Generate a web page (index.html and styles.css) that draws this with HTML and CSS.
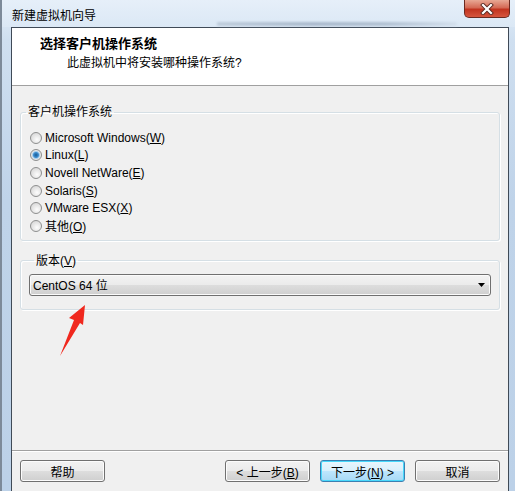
FILE: index.html
```html
<!DOCTYPE html>
<html>
<head>
    <meta charset="utf-8">
    <title>新建虚拟机向导</title>
    <link rel="stylesheet" href="styles.css">
</head>
<body>
    <div class="window">
        <div class="titlebar">
            <span class="title">新建虚拟机向导</span>
            <button class="close-btn" type="button">
                <svg width="16" height="12" viewBox="0 0 16 12">
                    <path d="M4 2 L12 10 M12 2 L4 10" stroke="#5a2a22" stroke-width="4" stroke-linecap="square"/>
                    <path d="M4 2 L12 10 M12 2 L4 10" stroke="#fff" stroke-width="2.2" stroke-linecap="square"/>
                </svg>
            </button>
        </div>

        <div class="client">
            <div class="header">
                <h1>选择客户机操作系统</h1>
                <p>此虚拟机中将安装哪种操作系统?</p>
            </div>

            <div class="content">
                <fieldset class="group">
                    <legend>客户机操作系统</legend>
                    <label class="radio"><input type="radio" name="os"><span>Microsoft Windows(<u>W</u>)</span></label>
                    <label class="radio"><input type="radio" name="os" checked><span>Linux(<u>L</u>)</span></label>
                    <label class="radio"><input type="radio" name="os"><span>Novell NetWare(<u>E</u>)</span></label>
                    <label class="radio"><input type="radio" name="os"><span>Solaris(<u>S</u>)</span></label>
                    <label class="radio"><input type="radio" name="os"><span>VMware ESX(<u>X</u>)</span></label>
                    <label class="radio"><input type="radio" name="os"><span>其他(<u>O</u>)</span></label>
                </fieldset>

                <fieldset class="group version">
                    <legend>版本(<u>V</u>)</legend>
                    <div class="select">
                        <span>CentOS 64 位</span>
                        <svg width="7" height="4" viewBox="0 0 7 4"><path d="M0 0 H7 L3.5 4 Z" fill="#000"/></svg>
                    </div>
                </fieldset>
            </div>

            <div class="footer">
                <button class="btn" type="button">帮助</button>
                <div class="nav">
                    <button class="btn" type="button">&lt; 上一步(<u>B</u>)</button>
                    <button class="btn default" type="button">下一步(<u>N</u>) &gt;</button>
                    <button class="btn" type="button">取消</button>
                </div>
            </div>
        </div>

        <!-- red pointer drawn over the dialog -->
        <svg class="pointer" width="60" height="80" viewBox="0 0 60 80">
            <path d="M43 15 L27 28 L32 30 L18 66 L38 33 L41 35 Z" fill="#f0281e"/>
        </svg>
    </div>
</body>
</html>
```

FILE: styles.css
```css
* {
    box-sizing: border-box;
}
body {
    margin: 0;
    font-family: "Liberation Sans", "Noto Sans CJK SC", sans-serif;
    font-size: 12px;
    color: #000;
    background: #fff;
}
.window {
    position: relative;
    width: 515px;
    height: 491px;
    overflow: hidden;
    background: linear-gradient(180deg, #e3edf8 0px, #cfdff0 40px, #bfd3e9 200px, #bcd1e8 491px);
    border-left: 2px solid #7d8a99;
}
.titlebar {
    position: relative;
    height: 27px;
    display: flex;
    align-items: flex-start;
    justify-content: space-between;
    background: linear-gradient(180deg, #e6eff9 0%, #dbe8f5 100%);
}
.titlebar::after {
    content: "";
    position: absolute;
    left: 215px;
    top: 22px;
    width: 240px;
    height: 4px;
    background: linear-gradient(90deg, #b8c6d6, #9fb0c4 40%, #a8b8cb 70%, #d2deeb);
    filter: blur(1.2px);
    opacity: 0.8;
}
.title {
    margin: 6px 0 0 10px;
    font-size: 12px;
    color: #000;
}
.close-btn {
    width: 46px;
    height: 18px;
    margin-right: 5px;
    padding: 0;
    border: 1px solid #6b2a20;
    border-top: none;
    border-radius: 0 0 5px 5px;
    background: linear-gradient(180deg, #e8a894 0%, #d46a55 45%, #c1341f 55%, #d6563e 100%);
    display: flex;
    align-items: center;
    justify-content: center;
}
.client {
    width: 498px;
    height: 464px;
    margin-left: 9px;
    background: #f0f0f0;
    border: 1px solid #3f4a57;
    border-bottom: none;
    display: flex;
    flex-direction: column;
}
.header {
    height: 58px;
    background: #fff;
    border-bottom: 1px solid #a0a0a0;
    padding: 8px 0 0 28px;
}
.header h1 {
    margin: 0;
    font-size: 13px;
    font-weight: bold;
    line-height: 16px;
}
.header p {
    margin: 3px 0 0 27px;
    font-size: 12px;
    line-height: 16px;
}
.content {
    flex: 1;
    padding: 18px 8px 0 8px;
}
.group {
    margin: 0;
    padding: 9px 0 5px 0;
    border: 1px solid #d5dfe5;
    border-radius: 3px;
    box-shadow: inset 1px 1px 0 #fff, 1px 1px 0 #fff;
}
.group legend {
    padding: 0 2px;
    margin-left: 5px;
    line-height: 16px;
}
.radio {
    display: flex;
    align-items: center;
    height: 17.6px;
    margin-left: 9px;
}
.radio input {
    appearance: none;
    -webkit-appearance: none;
    width: 12px;
    height: 12px;
    margin: 0 3px 0 0;
    border: 1px solid #8e8f8f;
    border-radius: 50%;
    background: radial-gradient(circle at 60% 65%, #fdfdfd 0%, #e3e3e3 55%, #d0d0d0 100%);
}
.radio input:checked {
    background: radial-gradient(circle, #1b5a92 0, #3d8ed0 2.5px, #a7cdec 3.5px, #e8e8e8 4.5px, #d5d5d5 100%);
}
.version {
    margin-top: 12px;
    padding: 5px 8px 13px 8px;
}
.select {
    height: 22px;
    padding: 0 5px 0 3px;
    border: 1px solid #707070;
    border-radius: 3px;
    background: linear-gradient(180deg, #f3f3f3 0%, #ebebeb 50%, #dddddd 51%, #cfcfcf 100%);
    box-shadow: inset 0 0 0 1px #fbfbfb;
    display: flex;
    align-items: center;
    justify-content: space-between;
    font-size: 12px;
}
.footer {
    height: 41px;
    border-top: 1px solid #a0a0a0;
    box-shadow: inset 0 1px 0 #fff;
    padding: 9px 8px 0 8px;
    display: flex;
    justify-content: space-between;
    align-items: flex-start;
}
.nav {
    display: flex;
    gap: 10px;
}
.btn {
    width: 85px;
    height: 22px;
    padding: 0;
    border: 1px solid #707070;
    border-radius: 3px;
    background: linear-gradient(180deg, #f2f2f2 0%, #ebebeb 50%, #dddddd 51%, #cfcfcf 100%);
    box-shadow: inset 0 0 0 1px #fcfcfc;
    font-family: "Liberation Sans", "Noto Sans CJK SC", sans-serif;
    font-size: 12px;
    color: #000;
}
.btn.default {
    border-color: #3c7fb1;
    box-shadow: inset 0 0 0 1px #48d8fb;
    background: linear-gradient(180deg, #eaf6fd 0%, #d9f0fc 50%, #bee6fd 51%, #a7d9f5 100%);
}
.pointer {
    position: absolute;
    left: 40px;
    top: 290px;
}
```
